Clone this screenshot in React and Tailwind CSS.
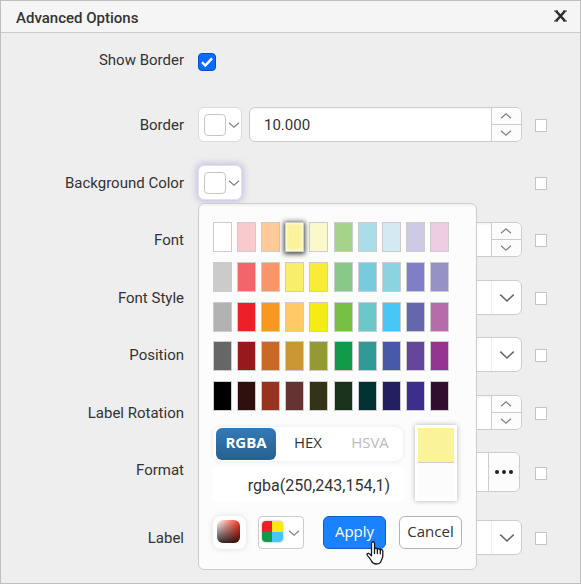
import React from 'react';

const palette = [
  '#ffffff', '#f9cacb', '#fdca99', '#faf39a', '#fbf8cc', '#a4d38a', '#a9dde8', '#d2ebf2', '#cccae5', '#eecce1',
  '#cbcbcb', '#f2666a', '#f8966a', '#f8ee6a', '#f8ec38', '#88c888', '#76ccdc', '#8ad3e0', '#807dc9', '#9492c6',
  '#b2b2b2', '#ed2027', '#f99820', '#ffcb66', '#f6eb14', '#76c043', '#69c8c9', '#48c6f5', '#6566ab', '#b76baa',
  '#666666', '#96191d', '#ca6827', '#ca9833', '#959935', '#109a49', '#329999', '#4859a7', '#64469a', '#963492',
  '#000000', '#2f100e', '#963420', '#663332', '#333317', '#1a331b', '#023332', '#232060', '#3b2e8c', '#310d2e',
];

function Chevron({ up = false, large = false }) {
  return (
    <svg
      className={large ? 'h-2 w-4' : 'h-1.5 w-3'}
      viewBox={large ? '0 0 16 8' : '0 0 12 6'}
      fill="none"
      stroke={large ? '#666' : '#7c8288'}
      strokeWidth={large ? 1.5 : 1.2}
      aria-hidden="true"
    >
      {large ? <path d="M1.300.6 8 7l6.700-6.400" /> : <path d={up ? 'M1 5.300 6 .9l5 4.400' : 'M1 .7l5 4.400L11 .7'} />}
    </svg>
  );
}

function Row({ id, text, tall = false, extra = '', reset = true, children }) {
  return (
    <div className={`flex items-start ${tall ? 'h-10' : 'h-[35px]'} ${extra}`}>
      <label htmlFor={id} className="flex h-[37px] w-[183px] shrink-0 items-center justify-end">
        {text}
      </label>
      <div className="ml-3.5 flex h-full min-w-0 flex-1 gap-[7px]">{children}</div>
      <div className={`ml-[13px] mr-8 flex w-[13px] shrink-0 items-center ${tall ? 'h-[43px]' : 'h-[37px]'}`}>
        {reset && (
          <input
            type="checkbox"
            aria-label={`Inherit ${text}`}
            className="h-[13px] w-3 appearance-none border border-[#c4c4c4] bg-white"
          />
        )}
      </div>
    </div>
  );
}

function ColorButton({ id, label, active = false }) {
  return (
    <button
      id={id}
      type="button"
      aria-label={label}
      className={`flex h-[35px] w-11 items-center gap-0.5 rounded-md border bg-white pl-[5px] ${
        active ? 'border-[#e2dff0] shadow-[0_0_6px_2px_rgba(140,125,205,0.4)]' : 'border-[#dcdcdc]'
      }`}
    >
      <span className="size-[22px] rounded border border-[#c6c6c6] bg-white" />
      <Chevron />
    </button>
  );
}

function Spinner({ id, value, name }) {
  return (
    <div className="flex h-full flex-1 overflow-hidden rounded-md border border-[#ccc] bg-white">
      <input
        id={id}
        type="text"
        defaultValue={value}
        className="min-w-0 flex-1 px-3.5 pt-0.5 shadow-[inset_0_2px_2px_rgba(0,0,0,0.04)] outline-none"
      />
      <div className="flex w-[30px] flex-col divide-y divide-[#ccc] border-l border-[#ccc] bg-[#fcfcfc]">
        <button type="button" aria-label={`Increase ${name}`} className="flex flex-1 items-center justify-center pr-0.5">
          <Chevron up />
        </button>
        <button type="button" aria-label={`Decrease ${name}`} className="flex flex-1 items-center justify-center pr-0.5">
          <Chevron />
        </button>
      </div>
    </div>
  );
}

function Select({ id }) {
  return (
    <div className="relative h-full flex-1">
      <select id={id} className="h-full w-full appearance-none rounded-md border border-[#ccc] bg-white px-3">
        <option />
      </select>
      <span className="pointer-events-none absolute inset-y-px right-px flex w-[30px] items-center justify-center border-l border-[#eee]">
        <Chevron large />
      </span>
    </div>
  );
}

function HandCursor() {
  return (
    <svg className="pointer-events-none absolute left-[43px] top-[25px] h-6 w-[18px]" viewBox="0 0 18 24" aria-hidden="true">
      <path
        d="M5.500 14.800V2.400C5.500.2 8.500.2 8.500 2.400v5.700c.3-1.300 2.700-1.200 2.900.3.500-1 2.700-.8 2.900.6.600-.9 2.500-.6 2.500 1.100v5c0 2.200-1.300 3.200-1.700 4.800-.6 2.200-2.500 3.100-4.800 3.100-2.400 0-3.800-1-4.700-2.800-.8-1.600-1.900-3.300-3.200-4.600-.8-.8-1.800-1.800-1.300-2.600.8-1.100 2.200-.4 3 .4z"
        fill="#fff"
        stroke="#15151f"
        strokeWidth="1.300"
        strokeLinejoin="round"
      />
      <path d="M8.500 8v4.500M11.400 8.600v4M14.300 9.200v3.600" fill="none" stroke="#15151f" strokeWidth="1.300" strokeLinecap="round" />
    </svg>
  );
}

function SpectrumIcon() {
  return (
    <svg className="size-[25px]" viewBox="0 0 25 25" aria-hidden="true">
      <defs>
        <linearGradient id="spectrum-hue">
          <stop offset="0" stopColor="#fff" />
          <stop offset="1" stopColor="#ff3320" />
        </linearGradient>
        <linearGradient id="spectrum-shade" x2="0" y2="1">
          <stop offset="0" stopColor="#000" stopOpacity="0" />
          <stop offset="1" stopColor="#000" stopOpacity=".8" />
        </linearGradient>
      </defs>
      <rect x="1" y="1" width="23" height="23" rx="6" fill="url(#spectrum-hue)" />
      <rect x="1" y="1" width="23" height="23" rx="6" fill="url(#spectrum-shade)" />
    </svg>
  );
}

function ColorPopup() {
  return (
    <div
      role="dialog"
      aria-label="Color picker"
      className="absolute left-0 top-[38px] z-10 w-[279px] rounded-md border border-[#ccc] bg-[#fcfcfc] px-3.5 pb-5 pt-[18px] shadow-[inset_0_2px_2px_rgba(0,0,0,0.04)]"
    >
      <div className="grid h-[189px] w-[236px] grid-cols-[repeat(10,19px)] content-between justify-between">
        {palette.map((color) => (
          <button
            key={color}
            type="button"
            aria-label={color}
            style={{ backgroundColor: color }}
            className={`h-[30px] border border-[#ccc] ${
              color === '#faf39a' ? 'shadow-[0_1px_5px_1px_rgba(0,0,0,0.75),inset_0_0_3px_1px_rgba(255,255,255,0.7)]' : ''
            }`}
          />
        ))}
      </div>

      <div className="mt-3.5 flex gap-2.5">
        <div className="flex w-[192px] flex-col gap-1.5 pt-0.5">
          <div className="mr-0.5 flex h-[34px] items-center gap-0.5 rounded-lg bg-white px-[3px] font-['Open_Sans','Noto_Sans',sans-serif] text-[15px] shadow-[0_0_5px_rgba(0,0,0,0.09)]">
            <button type="button" className="h-8 w-[60px] rounded-md bg-linear-to-b from-[#337ab7] to-[#28608f] pb-1 font-bold text-white">
              RGBA
            </button>
            <button type="button" className="h-8 w-[60px] pb-1">HEX</button>
            <button type="button" className="h-8 w-[60px] pb-1 text-[#bbb]">HSVA</button>
          </div>
          <input
            type="text"
            aria-label="Color value"
            defaultValue="rgba(250,243,154,1)"
            className="h-[35px] w-full rounded-md bg-white pl-5 pt-0.5 text-center text-base outline-none"
          />
        </div>
        <div className="flex h-[76px] w-[42px] flex-col bg-white p-[3px] shadow-[0_0_5px_rgba(0,0,0,0.3)]">
          <span className="h-[35px] border-b border-[#ccc] bg-[#faf39a]" />
          <span className="flex-1 bg-[#fcfcfc]" />
        </div>
      </div>

      <div className="mt-3.5 flex h-[33px] font-['Open_Sans','Noto_Sans',sans-serif] text-[15px]">
        <button type="button" aria-label="Color spectrum" className="flex w-[33px] items-center justify-center rounded-lg bg-white pb-0.5 pr-0.5 shadow-[0_0_6px_rgba(0,0,0,0.13)]">
          <SpectrumIcon />
        </button>
        <button type="button" aria-label="Palette" className="ml-3 flex w-[46px] items-center justify-center gap-[5px] rounded border border-[#ccc] bg-white pr-px">
          <span className="mb-0.5 grid size-[21px] grid-cols-2 overflow-hidden rounded shadow-[0_0_2px_#999]">
            <span className="bg-[#ed2027]" />
            <span className="bg-[#f8e914]" />
            <span className="bg-[#109a49]" />
            <span className="bg-[#48c6f5]" />
          </span>
          <Chevron />
        </button>
        <div className="relative ml-[19px] flex">
          <button type="button" className="w-[63px] rounded-md border border-[#0d5fc4] bg-[#1a82ff] pb-0.5 text-white">Apply</button>
          <HandCursor />
        </div>
        <button type="button" className="ml-[13px] w-[63px] rounded-md border border-[#b3b3b3] bg-white pb-0.5">Cancel</button>
      </div>
    </div>
  );
}

export default function App() {
  return (
    <main className="border border-[#bfbfbf] bg-[#eee] font-[Roboto,sans-serif] text-[15px] text-[#333]">
      <header className="flex h-8 items-center justify-between border-b border-[#ccc] bg-[#f5f5f5] pl-[15px] pr-3">
        <h1 className="pt-[3px] font-medium">Advanced Options</h1>
        <button type="button" aria-label="Close" className="pb-0.5">
          <svg className="h-3 w-[15px]" viewBox="0 0 15 12" fill="none" stroke="#2d2d2d" aria-hidden="true">
            <path d="M3 1l9 10M12 1 3 11" strokeWidth="2.600" />
            <path d="M1 1h4M10 1h4M1 11h4M10 11h4" strokeWidth="1" />
          </svg>
        </button>
      </header>

      <form className="pb-7 pt-[9px]">
        <Row id="show" text="Show Border" reset={false}>
          <span className="relative mt-[11px] size-[18px]">
            <input id="show" type="checkbox" defaultChecked className="block size-[18px] appearance-none rounded border border-[#0050c8] bg-[#0a6cff]" />
            <svg className="pointer-events-none absolute inset-0 size-[18px]" viewBox="0 0 18 18" aria-hidden="true">
              <path d="m4 9.200 3.300 3.300L14 5.400" fill="none" stroke="#fff" strokeWidth="2.400" />
            </svg>
          </span>
        </Row>
        <Row id="border" text="Border" extra="mt-[30px]">
          <ColorButton label="Border color" />
          <Spinner id="border" name="border" value="10.000" />
        </Row>
        <Row id="background" text="Background Color" extra="mt-[23px]">
          <div className="relative">
            <ColorButton id="background" label="Background color" active />
            <ColorPopup />
          </div>
        </Row>
        <Row id="font" text="Font" extra="mt-[22px]">
          <Spinner id="font" name="font" />
        </Row>
        <Row id="style" text="Font Style" extra="mt-[23px]">
          <Select id="style" />
        </Row>
        <Row id="position" text="Position" extra="mt-[22px]">
          <Select id="position" />
        </Row>
        <Row id="rotation" text="Label Rotation" extra="mt-[23px]">
          <Spinner id="rotation" name="rotation" />
        </Row>
        <Row id="format" text="Format" tall extra="mt-[22px]">
          <div className="mr-0.5 flex h-full flex-1 overflow-hidden rounded-md border border-[#ccc] bg-white">
            <input id="format" type="text" className="min-w-0 flex-1 px-3 outline-none" />
            <button type="button" aria-label="Choose format" className="flex w-[31px] items-center justify-center gap-[3px] border-l border-[#ccc] bg-[#fcfcfc]">
              <span className="size-1 rounded-full bg-[#222]" />
              <span className="size-1 rounded-full bg-[#222]" />
              <span className="size-1 rounded-full bg-[#222]" />
            </button>
          </div>
        </Row>
        <Row id="label" text="Label" extra="mt-7">
          <Select id="label" />
        </Row>
      </form>
    </main>
  );
}
